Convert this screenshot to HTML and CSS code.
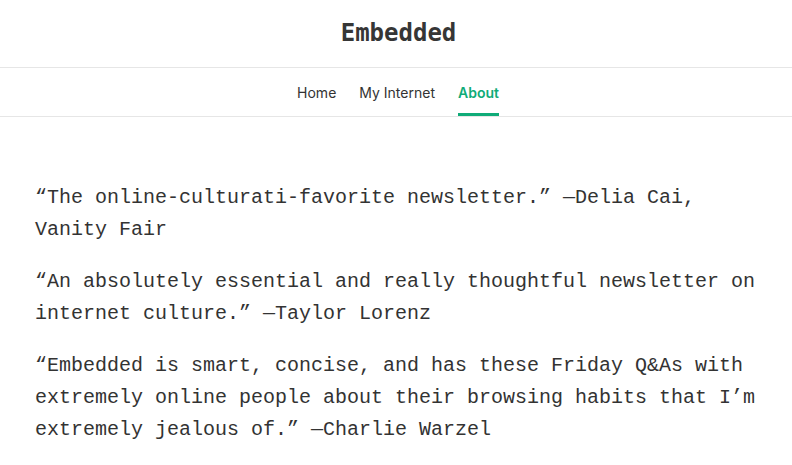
FILE: index.html
```html
<!DOCTYPE html>
<html lang="en">
<head>
    <meta charset="UTF-8">
    <meta name="viewport" content="width=device-width, initial-scale=1.0">
    <title>About - Embedded</title>
    <link rel="stylesheet" href="styles.css">
</head>
<body>
    <header class="site-header">
        <h1 class="site-title">Embedded</h1>
    </header>

    <nav class="site-nav">
        <a href="#" class="nav-link">Home</a>
        <a href="#" class="nav-link">My Internet</a>
        <a href="#" class="nav-link active">About</a>
    </nav>

    <main class="about">
        <p>“The online-culturati-favorite newsletter.” —Delia Cai, Vanity Fair</p>
        <p>“An absolutely essential and really thoughtful newsletter on internet culture.” —Taylor Lorenz</p>
        <p>“Embedded is smart, concise, and has these Friday Q&amp;As with extremely online people about their browsing habits that I’m extremely jealous of.” —Charlie Warzel</p>
    </main>
</body>
</html>
```

FILE: styles.css
```css
* {
    margin: 0;
    padding: 0;
    box-sizing: border-box;
}

body {
    font-family: Inter, "Liberation Sans", Arial, sans-serif;
    background: white;
    color: #333;
}

.site-header {
    height: 68px;
    display: flex;
    align-items: center;
    justify-content: center;
    border-bottom: 1px solid #e6e6e6;
}

.site-title {
    font-family: "DejaVu Sans Mono", monospace;
    font-size: 24px;
    font-weight: bold;
    color: #363636;
    padding: 0 0 1px 5px;
}

.site-nav {
    height: 49px;
    display: flex;
    justify-content: center;
    gap: 23px;
    padding-left: 4px;
    border-bottom: 1px solid #e6e6e6;
}

.nav-link {
    display: flex;
    align-items: center;
    padding-top: 4px;
    font-size: 14px;
    color: #333;
    text-decoration: none;
    border-bottom: 3px solid transparent;
}

.nav-link.active {
    color: #0fab78;
    font-weight: 600;
    border-bottom-color: #0fab78;
}

.about {
    width: 722px;
    margin: 0 auto;
    padding-top: 65px;
    font-family: "Liberation Mono", "Courier New", monospace;
    font-size: 20px;
    line-height: 32px;
    color: #333;
}

.about p {
    margin-bottom: 20px;
}
```
